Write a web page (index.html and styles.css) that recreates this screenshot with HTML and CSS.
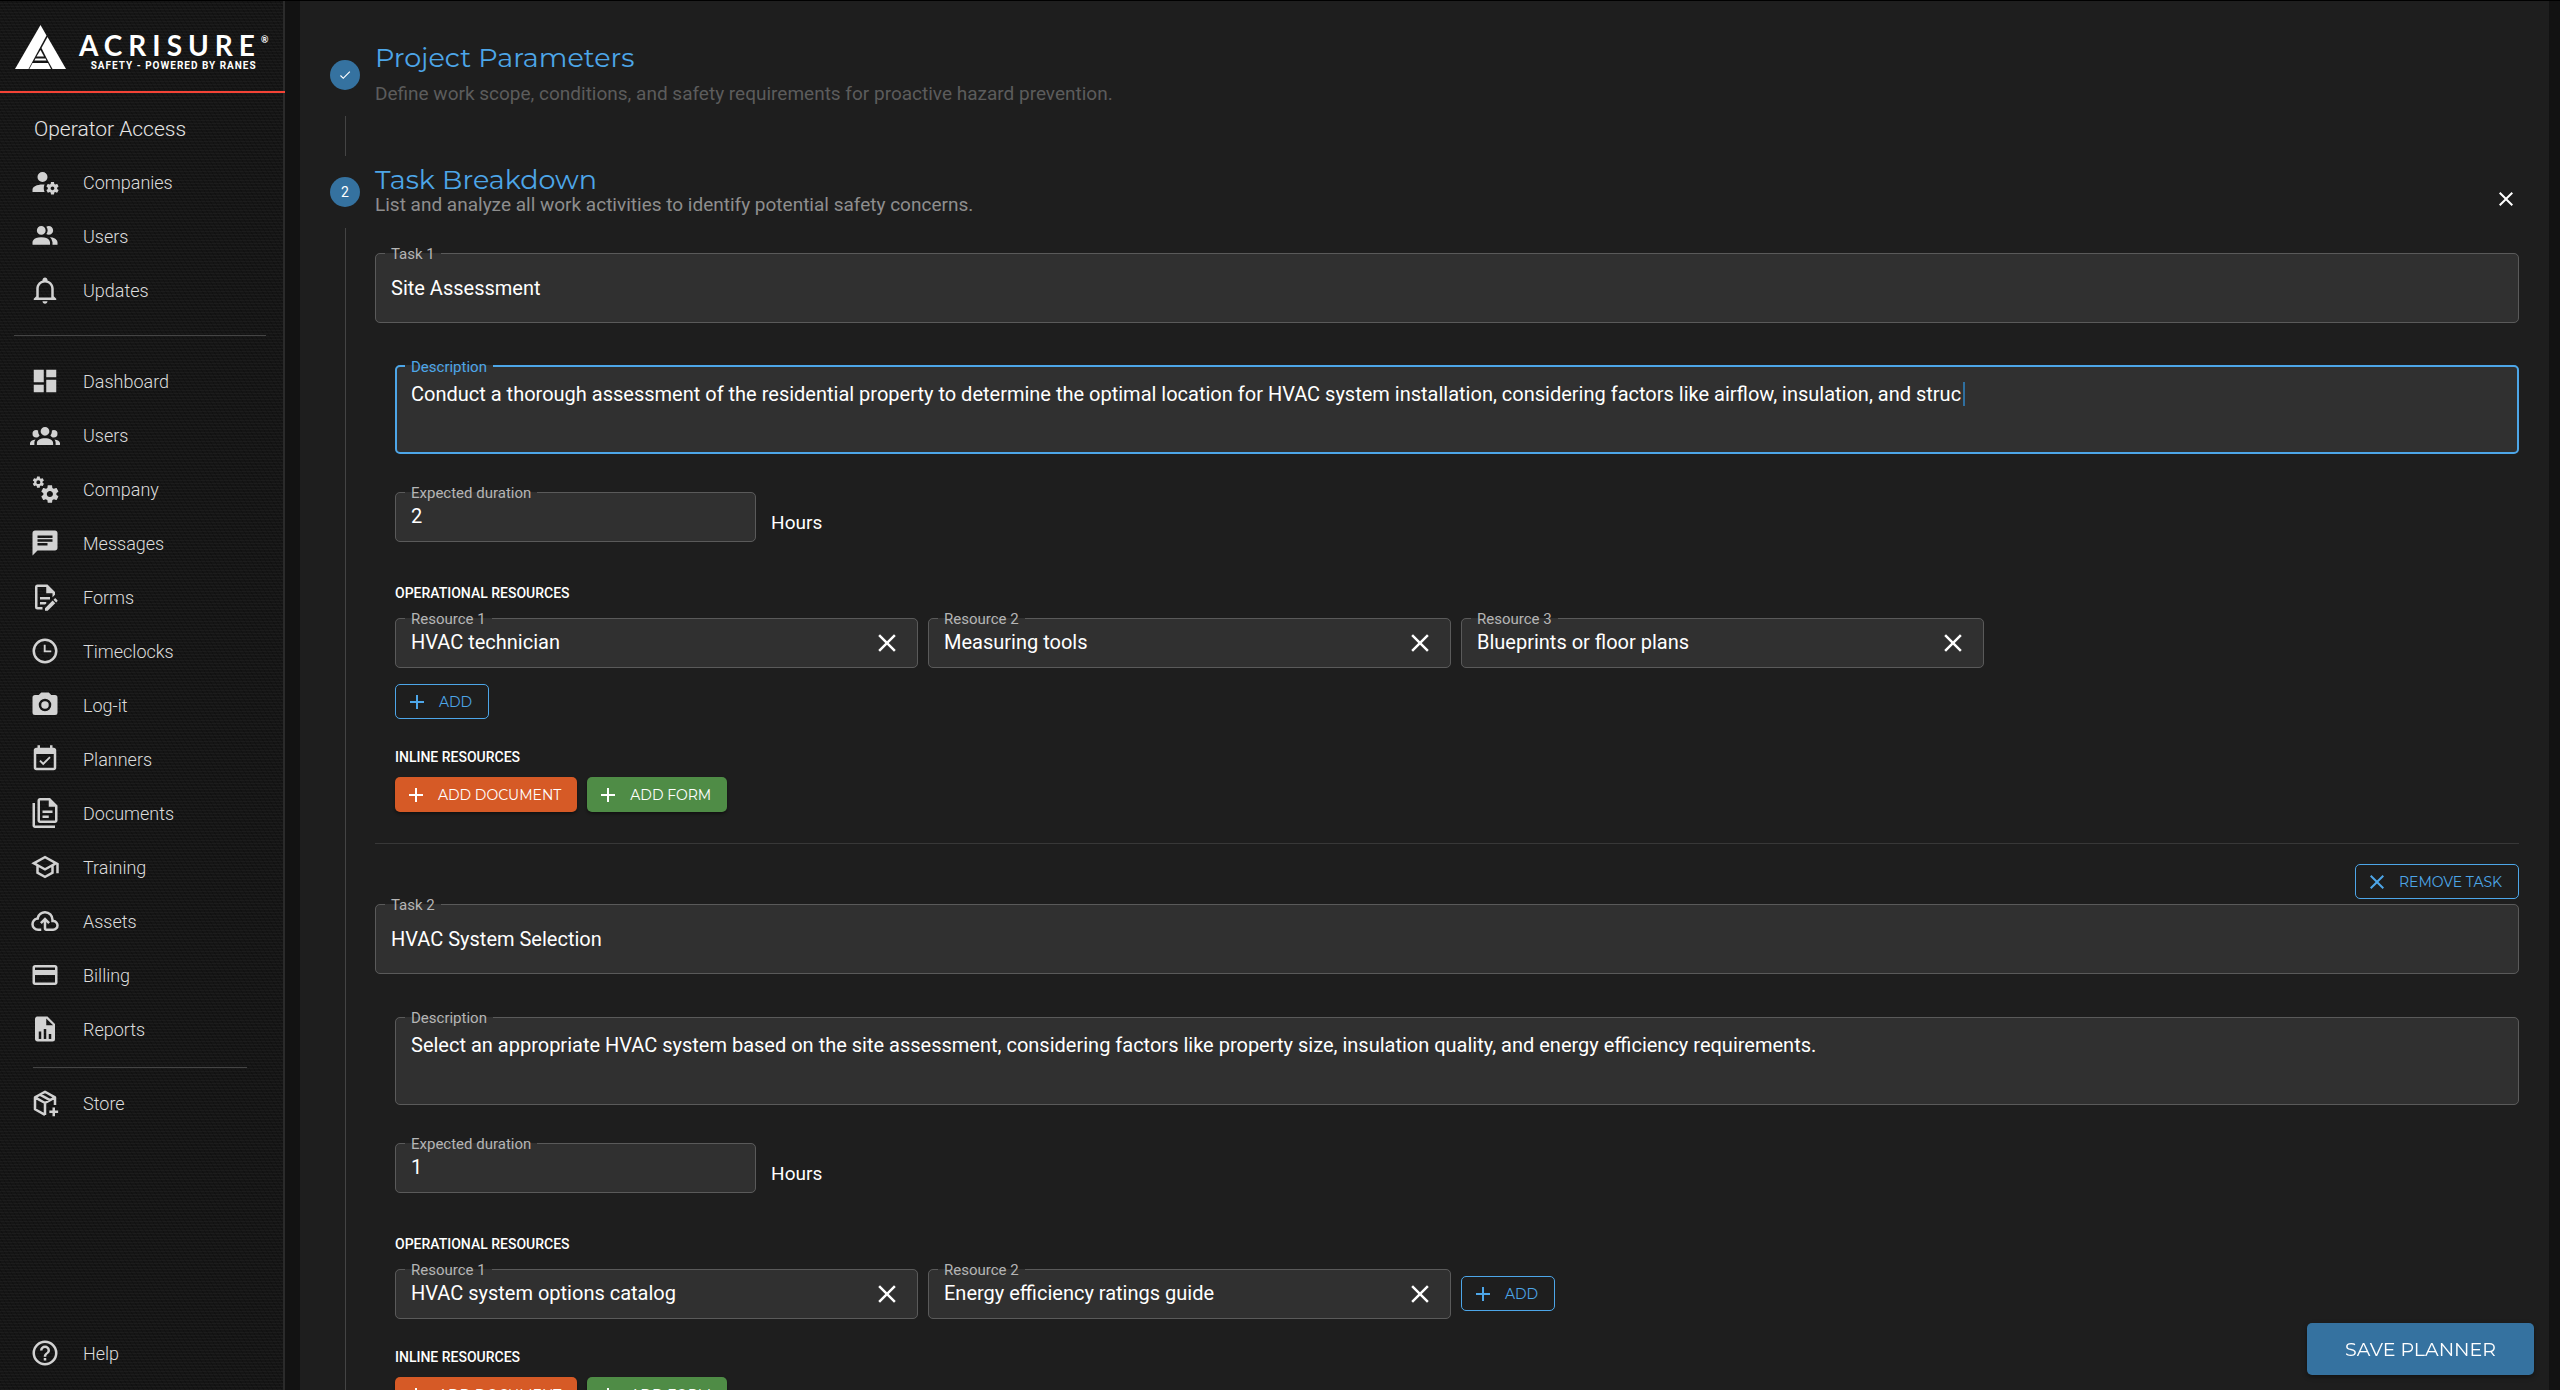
FILE: index.html
```html
<!DOCTYPE html>
<html lang="en">
<head>
  <meta charset="UTF-8" />
  <meta name="viewport" content="width=device-width, initial-scale=1.0"/>
  <title>Planner - Acrisure Safety</title>
  <link rel="stylesheet" href="styles.css">
</head>
<body>

  <!-- Sidebar -->
  <aside class="sidebar">
    <a class="brand" href="#">
      <svg class="brand-mark" viewBox="0 0 51 44" aria-hidden="true">
        <path d="M25.5 0L31.500 10.500L13.500 44H0z"/>
        <path d="M32.500 12L51 44H37.500L31.500 33L26.500 23z"/>
        <path d="M25.500 25L29 31.500H21.500z"/>
        <path d="M20.500 33.500H30.500L31.500 35.500H19.500z"/>
        <path d="M17.500 38H33L36 44H14.300z"/>
      </svg>
      <span class="brand-text">
        <span class="brand-name">ACRISURE<sup>®</sup></span>
        <span class="brand-tag">SAFETY - POWERED BY RANES</span>
      </span>
    </a>

    <h2 class="sidebar-title">Operator Access</h2>
    <nav class="menu">
      <a href="#"><svg viewBox="0 0 24 24"><path d="M10 4A4 4 0 0 0 6 8A4 4 0 0 0 10 12A4 4 0 0 0 14 8A4 4 0 0 0 10 4M17 12C16.87 12 16.76 12.09 16.74 12.21L16.55 13.53C16.25 13.66 15.96 13.82 15.7 14L14.46 13.5C14.35 13.5 14.22 13.5 14.15 13.63L13.15 15.36C13.09 15.47 13.11 15.6 13.21 15.68L14.27 16.5C14.25 16.67 14.24 16.83 14.24 17C14.24 17.17 14.25 17.33 14.27 17.5L13.21 18.32C13.12 18.4 13.09 18.53 13.15 18.64L14.15 20.37C14.21 20.5 14.34 20.5 14.46 20.5L15.7 20C15.96 20.18 16.24 20.35 16.55 20.47L16.74 21.79C16.76 21.91 16.86 22 17 22H19C19.11 22 19.22 21.91 19.24 21.79L19.43 20.47C19.73 20.34 20 20.18 20.27 20L21.5 20.5C21.63 20.5 21.76 20.5 21.83 20.37L22.83 18.64C22.89 18.53 22.86 18.4 22.77 18.32L21.7 17.5C21.72 17.33 21.74 17.17 21.74 17C21.74 16.83 21.73 16.67 21.7 16.5L22.76 15.68C22.85 15.6 22.88 15.47 22.82 15.36L21.82 13.63C21.76 13.5 21.63 13.5 21.5 13.5L20.27 14C20 13.82 19.73 13.65 19.42 13.53L19.23 12.21C19.22 12.09 19.11 12 19 12H17M10 14C5.58 14 2 15.79 2 18V20H11.68A7 7 0 0 1 11 17A7 7 0 0 1 11.64 14.09C11.11 14.03 10.56 14 10 14M18 15.5C18.83 15.5 19.5 16.17 19.5 17C19.5 17.83 18.83 18.5 18 18.5C17.16 18.5 16.5 17.83 16.5 17C16.5 16.17 17.17 15.5 18 15.5Z"/></svg>Companies</a>
      <a href="#"><svg viewBox="0 0 24 24"><path d="M16 17V19H2V17S2 13 9 13 16 17 16 17M12.5 7.5A3.5 3.5 0 1 0 9 11A3.5 3.5 0 0 0 12.5 7.5M15.94 13A5.32 5.32 0 0 1 18 17V19H22V17S22 13.37 15.94 13M15 4A3.39 3.39 0 0 0 13.07 4.59A5 5 0 0 1 13.07 10.41A3.39 3.39 0 0 0 15 11A3.5 3.5 0 0 0 15 4Z"/></svg>Users</a>
      <a href="#"><svg viewBox="0 0 24 24"><path d="M10 21H14C14 22.1 13.1 23 12 23S10 22.1 10 21M21 19V20H3V19L5 17V11C5 7.9 7 5.2 10 4.3V4C10 2.9 10.9 2 12 2S14 2.9 14 4V4.3C17 5.2 19 7.9 19 11V17L21 19M17 11C17 8.2 14.8 6 12 6S7 8.2 7 11V18H17V11Z"/></svg>Updates</a>
    </nav>
    <hr class="divider">
    <nav class="menu">
      <a href="#"><svg viewBox="0 0 24 24"><path d="M13 3V9H21V3M13 21H21V11H13M3 21H11V15H3M3 13H11V3H3V13Z"/></svg>Dashboard</a>
      <a href="#"><svg viewBox="0 0 24 24"><path d="M12 5.5A3.5 3.5 0 0 1 15.500 9A3.5 3.5 0 0 1 12 12.500A3.5 3.5 0 0 1 8.500 9A3.5 3.5 0 0 1 12 5.500M5 8C5.56 8 6.08 8.15 6.53 8.42C6.38 9.85 6.8 11.27 7.66 12.38C7.16 13.34 6.16 14 5 14A3 3 0 0 1 2 11A3 3 0 0 1 5 8M19 8A3 3 0 0 1 22 11A3 3 0 0 1 19 14C17.84 14 16.84 13.34 16.34 12.38C17.2 11.27 17.62 9.85 17.47 8.42C17.92 8.15 18.44 8 19 8M5.5 18.25C5.5 16.18 8.41 14.5 12 14.5C15.59 14.5 18.5 16.18 18.5 18.25V20H5.5V18.25M0 20V18.5C0 17.11 1.89 15.94 4.45 15.6C3.86 16.28 3.5 17.22 3.5 18.25V20H0M24 20H20.5V18.25C20.5 17.22 20.14 16.28 19.55 15.6C22.11 15.94 24 17.11 24 18.5V20Z"/></svg>Users</a>
      <a href="#"><svg viewBox="0 0 24 24"><path d="M15.9 18.45C17.25 18.45 18.35 17.35 18.35 16C18.35 14.65 17.25 13.55 15.9 13.55C14.54 13.55 13.45 14.65 13.45 16C13.45 17.35 14.54 18.45 15.9 18.45M21.1 16.68L22.58 17.84C22.71 17.95 22.75 18.13 22.66 18.29L21.26 20.71C21.17 20.86 21 20.92 20.83 20.86L19.09 20.16C18.73 20.44 18.33 20.67 17.91 20.85L17.64 22.7C17.62 22.87 17.47 23 17.3 23H14.5C14.32 23 14.18 22.87 14.15 22.7L13.89 20.85C13.46 20.67 13.07 20.44 12.71 20.16L10.96 20.86C10.81 20.92 10.62 20.86 10.54 20.71L9.14 18.29C9.05 18.13 9.09 17.95 9.22 17.84L10.7 16.68L10.65 16L10.7 15.31L9.22 14.16C9.09 14.05 9.05 13.86 9.14 13.71L10.54 11.29C10.62 11.13 10.81 11.07 10.96 11.13L12.71 11.84C13.07 11.56 13.46 11.32 13.89 11.15L14.15 9.29C14.18 9.13 14.32 9 14.5 9H17.3C17.47 9 17.62 9.13 17.64 9.29L17.91 11.15C18.33 11.32 18.73 11.56 19.09 11.84L20.83 11.13C21 11.07 21.17 11.13 21.26 11.29L22.66 13.71C22.75 13.86 22.71 14.05 22.58 14.16L21.1 15.31L21.15 16L21.1 16.68M6.69 8.07C7.56 8.07 8.26 7.37 8.26 6.5C8.26 5.63 7.56 4.92 6.69 4.92A1.58 1.58 0 0 0 5.11 6.5C5.11 7.37 5.82 8.07 6.69 8.07M10.03 6.94L11 7.68C11.07 7.75 11.09 7.87 11.03 7.97L10.13 9.53C10.08 9.63 9.96 9.67 9.86 9.63L8.74 9.18L8 9.62L7.81 10.81C7.79 10.92 7.7 11 7.59 11H5.79C5.67 11 5.58 10.92 5.56 10.81L5.4 9.62L4.64 9.18L3.5 9.63C3.41 9.67 3.3 9.63 3.24 9.53L2.34 7.97C2.28 7.87 2.31 7.75 2.39 7.68L3.34 6.94L3.31 6.5L3.34 6.06L2.39 5.32C2.31 5.25 2.28 5.13 2.34 5.03L3.24 3.47C3.3 3.37 3.41 3.33 3.5 3.37L4.63 3.82L5.4 3.38L5.56 2.19C5.58 2.08 5.67 2 5.79 2H7.59C7.7 2 7.79 2.08 7.81 2.19L8 3.38L8.74 3.82L9.86 3.37C9.96 3.33 10.08 3.37 10.13 3.47L11.03 5.03C11.09 5.13 11.07 5.25 11 5.32L10.03 6.06L10.06 6.5L10.03 6.94Z"/></svg>Company</a>
      <a href="#"><svg viewBox="0 0 24 24"><path d="M20 2H4c-1.1 0-2 .9-2 2v18l4-4h14c1.100 0 2-.9 2-2V4c0-1.100-.9-2-2-2zM6 9h12v2H6V9zm8 5H6v-2h8v2zm4-6H6V6h12v2z"/></svg>Messages</a>
      <a href="#"><svg viewBox="0 0 24 24"><path d="M8 12H16V14H8V12M10 20H6V4H13V9H18V12.1L20 10.1V8L14 2H6A2 2 0 0 0 4 4V20A2 2 0 0 0 6 22H10V20M8 18H12.1L13 17.1V16H8V18M20.2 13C20.3 13 20.5 13.1 20.6 13.2L21.9 14.5C22.1 14.7 22.1 15.1 21.9 15.3L20.9 16.3L18.8 14.2L19.8 13.2C19.9 13.1 20 13 20.2 13M20.2 16.9L14.1 23H12V20.9L18.1 14.8L20.2 16.9Z"/></svg>Forms</a>
      <a href="#"><svg viewBox="0 0 24 24"><path d="M12 20A8 8 0 0 0 20 12A8 8 0 0 0 12 4A8 8 0 0 0 4 12A8 8 0 0 0 12 20M12 2A10 10 0 0 1 22 12A10 10 0 0 1 12 22C6.47 22 2 17.5 2 12A10 10 0 0 1 12 2M11 7H12.5V11.5H17V13H11V7Z"/></svg>Timeclocks</a>
      <a href="#"><svg viewBox="0 0 24 24"><path d="M4 4H7L9 2H15L17 4H20A2 2 0 0 1 22 6V18A2 2 0 0 1 20 20H4A2 2 0 0 1 2 18V6A2 2 0 0 1 4 4M12 7A5 5 0 0 0 7 12A5 5 0 0 0 12 17A5 5 0 0 0 17 12A5 5 0 0 0 12 7M12 9A3 3 0 0 1 15 12A3 3 0 0 1 12 15A3 3 0 0 1 9 12A3 3 0 0 1 12 9Z"/></svg>Log-it</a>
      <a href="#"><svg viewBox="0 0 24 24"><path d="M16.53 11.06L15.47 10l-4.88 4.88-2.12-2.12-1.06 1.06L10.59 17l5.94-5.94zM19 3h-1V1h-2v2H8V1H6v2H5c-1.11 0-1.99.9-1.99 2L3 19c0 1.1.89 2 2 2h14c1.1 0 2-.9 2-2V5c0-1.1-.9-2-2-2zm0 16H5V8h14v11z"/></svg>Planners</a>
      <a href="#"><svg viewBox="0 0 24 24"><path d="M16 0H8C6.9 0 6 .9 6 2V18C6 19.1 6.9 20 8 20H20C21.1 20 22 19.1 22 18V6L16 0M20 18H8V2H15V7H20V18M4 4V22H20V24H4C2.9 24 2 23.1 2 22V4H4M10 10V12H18V10H10M10 14V16H15V14H10Z"/></svg>Documents</a>
      <a href="#"><svg viewBox="0 0 24 24"><path d="M12 3L1 9L5 11.18V17.18L12 21L19 17.18V11.18L21 10.09V17H23V9L12 3M18.82 9L12 12.72L5.18 9L12 5.28L18.82 9M17 16L12 18.72L7 16V12.27L12 15L17 12.27V16Z"/></svg>Training</a>
      <a href="#"><svg viewBox="0 0 24 24"><path d="M6.5 20Q4.22 20 2.61 18.43 1 16.85 1 14.58 1 12.63 2.17 11.1 3.35 9.57 5.25 9.15 5.88 6.85 7.75 5.43 9.63 4 12 4 14.93 4 16.96 6.04 19 8.07 19 11 20.73 11.2 21.86 12.5 23 13.78 23 15.5 23 17.38 21.69 18.69 20.38 20 18.5 20H13Q12.18 20 11.59 19.41 11 18.83 11 18V12.85L9.4 14.4L8 13L12 9L16 13L14.6 14.4L13 12.85V18H18.5Q19.55 18 20.27 17.27 21 16.55 21 15.5 21 14.45 20.27 13.73 19.55 13 18.5 13H17V11Q17 8.93 15.54 7.46 14.08 6 12 6 9.93 6 8.46 7.46 7 8.93 7 11H6.5Q5.05 11 4.03 12.03 3 13.05 3 14.5 3 15.95 4.03 17 5.05 18 6.5 18H9V20Z"/></svg>Assets</a>
      <a href="#"><svg viewBox="0 0 24 24"><path d="M20 8H4V6H20M20 18H4V12H20M20 4H4C2.89 4 2 4.89 2 6V18C2 19.11 2.9 20 4 20H20C21.11 20 22 19.11 22 18V6C22 4.89 21.1 4 20 4Z"/></svg>Billing</a>
      <a href="#"><svg viewBox="0 0 24 24"><path d="M13 9H18.5L13 3.5V9M6 2H14L20 8V20A2 2 0 0 1 18 22H6C4.89 22 4 21.1 4 20V4C4 2.89 4.89 2 6 2M7 20H9V14H7V20M11 20H13V12H11V20M15 20H17V16H15V20Z"/></svg>Reports</a>
    </nav>
    <hr class="divider divider-short">
    <nav class="menu">
      <a href="#"><svg viewBox="0 0 24 24"><path class="line" d="M12 21.500L4 17V7.500L12 3L20 7.500V13.500M4 7.500L12 12L20 7.500M12 12V21.500M8 5.300L16 9.700M19 15.500V22.500M15.500 19H22.500"/></svg>Store</a>
    </nav>
    <nav class="menu menu-bottom">
      <a href="#"><svg viewBox="0 0 24 24"><path d="M11 18H13V16H11V18M12 2A10 10 0 0 0 2 12A10 10 0 0 0 12 22A10 10 0 0 0 22 12A10 10 0 0 0 12 2M12 20C7.59 20 4 16.41 4 12C4 7.59 7.59 4 12 4C16.41 4 20 7.59 20 12C20 16.41 16.41 20 12 20M12 6A4 4 0 0 0 8 10H10A2 2 0 0 1 12 8A2 2 0 0 1 14 10C14 12 11 11.75 11 15H13C13 12.75 16 12.5 16 10A4 4 0 0 0 12 6Z"/></svg>Help</a>
    </nav>
  </aside>

  <!-- Planner form -->
  <main>
    <div class="panel">

      <section class="step step-done">
        <div class="step-side">
          <span class="step-badge"><svg viewBox="0 0 24 24"><path d="M21 7L9 19L3.500 13.500L4.900 12.100L9 16.200L19.600 5.600L21 7Z"/></svg></span>
          <span class="step-line"></span>
        </div>
        <div class="step-body">
          <h1>Project Parameters</h1>
          <p>Define work scope, conditions, and safety requirements for proactive hazard prevention.</p>
        </div>
      </section>

      <section class="step step-active">
        <div class="step-side">
          <span class="step-badge">2</span>
          <span class="step-line"></span>
        </div>
        <div class="step-body">
          <header class="step-head">
            <div>
              <h1>Task Breakdown</h1>
              <p>List and analyze all work activities to identify potential safety concerns.</p>
            </div>
            <button class="icon-btn" type="button" aria-label="Close"><svg viewBox="0 0 24 24"><path d="M19 6.400L17.600 5L12 10.600L6.400 5L5 6.400L10.600 12L5 17.600L6.400 19L12 13.400L17.600 19L19 17.600L13.400 12L19 6.400Z"/></svg></button>
          </header>

          <form class="tasks">
            <!-- Task 1 -->
            <div class="task">
              <fieldset class="field field-title">
                <legend><label for="task1-name">Task 1</label></legend>
                <input type="text" id="task1-name" value="Site Assessment">
              </fieldset>
              <div class="task-detail">
                <fieldset class="field field-desc focused">
                  <legend><label for="task1-desc">Description</label></legend>
                  <textarea id="task1-desc">Conduct a thorough assessment of the residential property to determine the optimal location for HVAC system installation, considering factors like airflow, insulation, and struc</textarea>
                  <span class="caret"></span>
                </fieldset>
                <div class="duration">
                  <fieldset class="field">
                    <legend><label for="task1-duration">Expected duration</label></legend>
                    <input type="text" id="task1-duration" value="2">
                  </fieldset>
                  <span>Hours</span>
                </div>

                <h3>Operational Resources</h3>
                <div class="resources">
                  <fieldset class="field">
                    <legend><label for="task1-res1">Resource 1</label></legend>
                    <input type="text" id="task1-res1" value="HVAC technician">
                    <button class="clear-btn" type="button" aria-label="Remove"><svg viewBox="0 0 24 24"><path d="M19 6.400L17.600 5L12 10.600L6.400 5L5 6.400L10.600 12L5 17.600L6.400 19L12 13.400L17.600 19L19 17.600L13.400 12L19 6.400Z"/></svg></button>
                  </fieldset>
                  <fieldset class="field">
                    <legend><label for="task1-res2">Resource 2</label></legend>
                    <input type="text" id="task1-res2" value="Measuring tools">
                    <button class="clear-btn" type="button" aria-label="Remove"><svg viewBox="0 0 24 24"><path d="M19 6.400L17.600 5L12 10.600L6.400 5L5 6.400L10.600 12L5 17.600L6.400 19L12 13.400L17.600 19L19 17.600L13.400 12L19 6.400Z"/></svg></button>
                  </fieldset>
                  <fieldset class="field">
                    <legend><label for="task1-res3">Resource 3</label></legend>
                    <input type="text" id="task1-res3" value="Blueprints or floor plans">
                    <button class="clear-btn" type="button" aria-label="Remove"><svg viewBox="0 0 24 24"><path d="M19 6.400L17.600 5L12 10.600L6.400 5L5 6.400L10.600 12L5 17.600L6.400 19L12 13.400L17.600 19L19 17.600L13.400 12L19 6.400Z"/></svg></button>
                  </fieldset>
                  <button class="btn btn-outline" type="button"><svg viewBox="0 0 24 24"><path d="M19 13H13V19H11V13H5V11H11V5H13V11H19V13Z"/></svg>Add</button>
                </div>

                <h3>Inline Resources</h3>
                <div class="actions">
                  <button class="btn btn-orange" type="button"><svg viewBox="0 0 24 24"><path d="M19 13H13V19H11V13H5V11H11V5H13V11H19V13Z"/></svg>Add Document</button>
                  <button class="btn btn-green" type="button"><svg viewBox="0 0 24 24"><path d="M19 13H13V19H11V13H5V11H11V5H13V11H19V13Z"/></svg>Add Form</button>
                </div>
              </div>
            </div>

            <hr class="task-divider">

            <!-- Task 2 -->
            <div class="task">
              <div class="task-tools">
                <button class="btn btn-outline" type="button"><svg viewBox="0 0 24 24"><path d="M19 6.400L17.600 5L12 10.600L6.400 5L5 6.400L10.600 12L5 17.600L6.400 19L12 13.400L17.600 19L19 17.600L13.400 12L19 6.400Z"/></svg>Remove Task</button>
              </div>
              <fieldset class="field field-title">
                <legend><label for="task2-name">Task 2</label></legend>
                <input type="text" id="task2-name" value="HVAC System Selection">
              </fieldset>
              <div class="task-detail">
                <fieldset class="field field-desc">
                  <legend><label for="task2-desc">Description</label></legend>
                  <textarea id="task2-desc">Select an appropriate HVAC system based on the site assessment, considering factors like property size, insulation quality, and energy efficiency requirements.</textarea>
                </fieldset>
                <div class="duration">
                  <fieldset class="field">
                    <legend><label for="task2-duration">Expected duration</label></legend>
                    <input type="text" id="task2-duration" value="1">
                  </fieldset>
                  <span>Hours</span>
                </div>

                <h3>Operational Resources</h3>
                <div class="resources">
                  <fieldset class="field">
                    <legend><label for="task2-res1">Resource 1</label></legend>
                    <input type="text" id="task2-res1" value="HVAC system options catalog">
                    <button class="clear-btn" type="button" aria-label="Remove"><svg viewBox="0 0 24 24"><path d="M19 6.400L17.600 5L12 10.600L6.400 5L5 6.400L10.600 12L5 17.600L6.400 19L12 13.400L17.600 19L19 17.600L13.400 12L19 6.400Z"/></svg></button>
                  </fieldset>
                  <fieldset class="field">
                    <legend><label for="task2-res2">Resource 2</label></legend>
                    <input type="text" id="task2-res2" value="Energy efficiency ratings guide">
                    <button class="clear-btn" type="button" aria-label="Remove"><svg viewBox="0 0 24 24"><path d="M19 6.400L17.600 5L12 10.600L6.400 5L5 6.400L10.600 12L5 17.600L6.400 19L12 13.400L17.600 19L19 17.600L13.400 12L19 6.400Z"/></svg></button>
                  </fieldset>
                  <button class="btn btn-outline" type="button"><svg viewBox="0 0 24 24"><path d="M19 13H13V19H11V13H5V11H11V5H13V11H19V13Z"/></svg>Add</button>
                </div>

                <h3>Inline Resources</h3>
                <div class="actions">
                  <button class="btn btn-orange" type="button"><svg viewBox="0 0 24 24"><path d="M19 13H13V19H11V13H5V11H11V5H13V11H19V13Z"/></svg>Add Document</button>
                  <button class="btn btn-green" type="button"><svg viewBox="0 0 24 24"><path d="M19 13H13V19H11V13H5V11H11V5H13V11H19V13Z"/></svg>Add Form</button>
                </div>
              </div>
            </div>
          </form>
        </div>
      </section>

    </div>
    <button class="save-btn" type="button">Save Planner</button>
  </main>

</body>
</html>
```

FILE: styles.css
```css
* {
  box-sizing: border-box;
}

body {
  font-family: Roboto, "Liberation Sans", sans-serif;
  background: #121212;
  color: #fff;
  margin: 0;
  display: flex;
  height: 100vh;
  overflow: hidden;
  border-top: 1px solid #000;
}

h1, h2, h3, p {
  margin: 0;
}

button {
  font-family: Montserrat, Inter, sans-serif;
  cursor: pointer;
}

svg {
  fill: currentColor;
  flex: none;
}

/* Sidebar */
.sidebar {
  width: 285px;
  flex: none;
  display: flex;
  flex-direction: column;
  border-right: 2px solid #2b2b2b;
  background-color: #151515;
  background-image:
    repeating-linear-gradient(0deg, rgba(255, 255, 255, 0.03) 0 1px, transparent 1px 3px),
    repeating-linear-gradient(60deg, rgba(0, 0, 0, 0.2) 0 1px, transparent 1px 4px);
}

.brand {
  display: flex;
  align-items: flex-start;
  gap: 13px;
  height: 92px;
  margin-right: -2px;
  padding: 24px 0 0 15px;
  border-bottom: 2px solid #f44336;
  color: #fff;
  text-decoration: none;
}

.brand-mark {
  width: 51px;
  height: 44px;
}

.brand-text {
  display: flex;
  flex-direction: column;
  align-items: center;
  padding-top: 6px;
}

.brand-name {
  font-family: Lato, sans-serif;
  font-size: 28px;
  font-weight: 700;
  line-height: 29px;
  letter-spacing: 6px;
}

.brand-name sup {
  font-size: 9px;
  line-height: 0;
  vertical-align: 13px;
  letter-spacing: 0;
}

.brand-tag {
  font-size: 10px;
  font-weight: 700;
  line-height: 12px;
  letter-spacing: 1px;
}

.sidebar-title {
  font-size: 21px;
  font-weight: 300;
  line-height: 28px;
  padding: 22px 0 12px 34px;
  color: #e6e6e6;
}

.menu {
  display: flex;
  flex-direction: column;
}

.menu a {
  display: flex;
  align-items: center;
  gap: 23px;
  height: 54px;
  padding-left: 30px;
  color: #dcdcdc;
  font-size: 18px;
  font-weight: 300;
  text-decoration: none;
}

.menu svg {
  width: 30px;
  height: 30px;
  fill: #d2d2d2;
}

.menu svg .line {
  fill: none;
  stroke: #d2d2d2;
  stroke-width: 2;
  stroke-linejoin: round;
}

.menu-bottom {
  margin-top: auto;
  margin-bottom: 10px;
}

.divider {
  width: 252px;
  margin: 18px 0 18px 14px;
  border: none;
  border-top: 1px solid #444;
}

.divider-short {
  width: 214px;
  margin: 11px 0 8px 33px;
}

/* Stepper */
main {
  flex: 1;
  min-width: 0;
  padding: 0 11px 0 15px;
}

.panel {
  min-height: 100%;
  padding: 43px 30px 40px;
  background: #1e1e1e;
}

.step {
  display: flex;
  gap: 15px;
}

.step-side {
  width: 30px;
  flex: none;
  display: flex;
  flex-direction: column;
  align-items: center;
}

.step-badge {
  width: 30px;
  height: 30px;
  display: flex;
  align-items: center;
  justify-content: center;
  border-radius: 50%;
  background: #3572a0;
  font-size: 14px;
}

.step-badge svg {
  width: 14px;
  height: 14px;
}

.step-line {
  width: 1px;
  background: #444;
}

.step-body {
  flex: 1;
  min-width: 0;
}

.step-body h1 {
  font-family: Montserrat, Inter, sans-serif;
  font-size: 27px;
  font-weight: 400;
  line-height: 28px;
  color: #4da6e8;
}

.step-body p {
  font-size: 19px;
  line-height: 22px;
  color: #8e8e8e;
}

.step-done {
  padding-bottom: 10px;
}

.step-done .step-side {
  padding-top: 16px;
}

.step-done .step-line {
  height: 40px;
  margin-top: 26px;
}

.step-done p {
  margin-top: 11px;
  color: #5c5c5c;
}

.step-active .step-side {
  padding-top: 11px;
}

.step-active .step-line {
  flex: 1;
  margin-top: 21px;
}

.step-head {
  display: flex;
  justify-content: space-between;
  align-items: flex-end;
  margin-bottom: 28px;
}

.icon-btn {
  width: 26px;
  height: 34px;
  padding: 0;
  border: none;
  background: none;
  color: #fff;
}

.icon-btn svg {
  display: block;
  width: 24px;
  height: 24px;
  margin: auto;
}

/* Outlined fields */
.field {
  display: flex;
  align-items: flex-start;
  position: relative;
  height: 59px;
  min-width: 0;
  margin: 0;
  padding: 0 9px;
  border: 1px solid #5a5a5a;
  border-radius: 5px;
  background: #303030;
}

.field legend {
  padding: 2px 6px 0;
  font-size: 15px;
  line-height: 16px;
  color: #b5b5b5;
}

.field input,
.field textarea {
  flex: 1;
  min-width: 0;
  height: 30px;
  padding: 0 6px;
  border: none;
  outline: none;
  background: none;
  color: #fff;
  font-family: inherit;
  font-size: 20px;
  line-height: 24px;
}

.field textarea {
  height: 76px;
  padding-top: 7px;
  resize: none;
}

.field-title {
  height: 79px;
}

.field-title input {
  height: 52px;
}

.field-desc {
  height: 97px;
}

.focused {
  border: 2px solid #4da6e8;
  padding: 0 8px;
}

.focused legend {
  color: #4da6e8;
}

/* text cursor of the focused description */
.caret {
  position: absolute;
  top: 7px;
  left: 1566px;
  width: 2px;
  height: 24px;
  background: #2f6f9f;
}

.clear-btn {
  width: 42px;
  height: 31px;
  padding: 0;
  border: none;
  background: none;
  color: #fff;
}

.clear-btn svg {
  display: block;
  width: 30px;
  height: 30px;
  margin: auto;
}

/* Tasks */
.task-detail {
  padding: 34px 0 0 20px;
}

.duration {
  display: flex;
  align-items: flex-end;
  gap: 15px;
  margin-top: 29px;
}

.duration .field {
  width: 17%;
}

.duration span {
  font-size: 19px;
  line-height: 24px;
  margin-bottom: 7px;
}

.task h3 {
  margin-top: 20px;
  font-size: 14px;
  font-weight: 500;
  line-height: 20px;
  text-transform: uppercase;
}

.duration + h3 {
  margin-top: 41px;
}

.resources {
  display: grid;
  grid-template-columns: repeat(3, 1fr);
  column-gap: 10px;
  align-items: center;
  justify-items: start;
  width: 75%;
  max-width: 1589px;
  margin-top: 6px;
}

.resources .field {
  width: 100%;
  margin-bottom: 8px;
}

.resources .btn {
  margin: 8px 0;
}

.actions {
  display: flex;
  gap: 10px;
  margin-top: 10px;
}

.btn {
  display: flex;
  align-items: center;
  gap: 10px;
  height: 35px;
  padding: 0 16px 0 9px;
  border: none;
  border-radius: 5px;
  color: #fff;
  font-size: 14px;
  text-transform: uppercase;
}

.btn svg {
  width: 24px;
  height: 24px;
}

.btn-outline {
  border: 1px solid #4da6e8;
  background: none;
  color: #4da6e8;
}

.btn-orange {
  background: #d65a26;
  box-shadow: 0 2px 3px rgba(0, 0, 0, 0.4);
}

.btn-green {
  background: #4f8c46;
  box-shadow: 0 2px 3px rgba(0, 0, 0, 0.4);
}

.task-divider {
  margin: 31px 0 20px;
  border: none;
  border-top: 1px solid #383838;
}

.task-tools {
  display: flex;
  justify-content: flex-end;
  margin-bottom: -4px;
}

.save-btn {
  position: fixed;
  right: 26px;
  bottom: 15px;
  height: 52px;
  padding: 0 38px;
  border: none;
  border-radius: 5px;
  background: #3572a0;
  box-shadow: 0 2px 5px rgba(0, 0, 0, 0.4);
  color: #fff;
  font-size: 19px;
  text-transform: uppercase;
}
```
